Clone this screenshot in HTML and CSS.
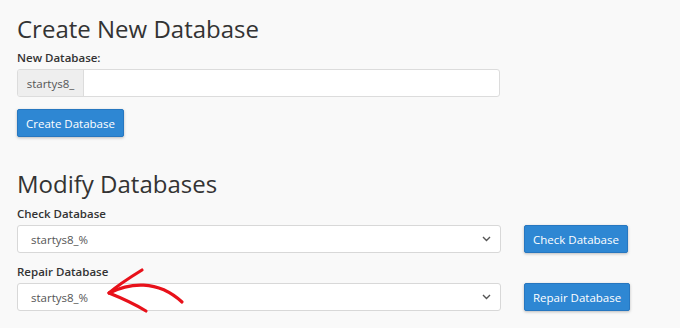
FILE: index.html
```html
<!DOCTYPE html>
<html>
<head>
<meta charset="utf-8">
<link rel="stylesheet" href="styles.css">
</head>
<body>
<div class="page">
  <section class="section">
    <h2 class="title">Create New Database</h2>
    <label class="label first">New Database:</label>
    <div class="input-group">
      <span class="addon">startys8_</span>
      <span class="field"></span>
    </div>
    <div class="actions">
      <button class="btn">Create Database</button>
    </div>
  </section>
  <section class="section modify">
    <h2 class="title">Modify Databases</h2>
    <label class="label first">Check Database</label>
    <div class="row">
      <div class="select"><span>startys8_%</span><svg class="chev" width="9" height="6" viewBox="0 0 9 6"><path d="M1 1l3.5 3.5L8 1" fill="none" stroke="#555" stroke-width="1.4"/></svg></div>
      <button class="btn">Check Database</button>
    </div>
    <label class="label">Repair Database</label>
    <div class="row">
      <div class="select"><span>startys8_%</span><svg class="chev" width="9" height="6" viewBox="0 0 9 6"><path d="M1 1l3.5 3.5L8 1" fill="none" stroke="#555" stroke-width="1.4"/></svg></div>
      <button class="btn">Repair Database</button>
    </div>
  </section>
  <svg class="arrow" width="100" height="60" viewBox="0 0 100 60">
    <path d="M10 34 C 30 24, 58 20, 83 43" fill="none" stroke="#e8111a" stroke-width="3.2" stroke-linecap="round"/>
    <path d="M43 11 C 30 19, 18 27, 10 34 C 20 38, 34 44, 47 52" fill="none" stroke="#e8111a" stroke-width="3.2" stroke-linecap="round" stroke-linejoin="round"/>
  </svg>
</div>
</body>
</html>
```

FILE: styles.css
```css
html, body {
  margin: 0;
  padding: 0;
  background: #f9f9f9;
}
body {
  font-family: "Open Sans", "Liberation Sans", sans-serif;
  color: #333;
  width: 680px;
  height: 328px;
  overflow: hidden;
}
.page {
  position: relative;
  padding: 12px 0 0 17px;
}
.title {
  margin: 0;
  font-size: 24px;
  font-weight: 400;
  line-height: 34px;
  color: #333;
}
.label {
  display: block;
  font-size: 11.5px;
  font-weight: 600;
  line-height: 18px;
  margin-top: 10px;
  color: #333;
}
.label.first { margin-top: 3px; }
.input-group {
  display: flex;
  width: 483px;
  height: 28px;
  margin-top: 2px;
  box-sizing: border-box;
  border: 1px solid #dcdcdc;
  border-radius: 3px;
  background: #fff;
  overflow: hidden;
}
.addon {
  width: 65px;
  background: #eee;
  border-right: 1px solid #dcdcdc;
  font-size: 11.5px;
  color: #555;
  display: flex;
  align-items: center;
  justify-content: center;
}
.field { flex: 1; }
.actions { margin-top: 12px; }
.btn {
  font-family: "Open Sans", "Liberation Sans", sans-serif;
  font-size: 11.5px;
  color: #fff;
  background: #2e87d3;
  border: 1px solid #2777c0;
  border-radius: 2px;
  height: 28px;
  padding: 0 8px;
  box-shadow: 0 1px 3px rgba(0,0,0,0.25);
  cursor: pointer;
}
.modify { margin-top: 30px; }
.modify .label.first { margin-top: 4px; }
.row {
  display: flex;
  align-items: center;
  gap: 23px;
  margin-top: 2px;
}
.select {
  width: 484px;
  height: 28px;
  box-sizing: border-box;
  border: 1px solid #d8d8d8;
  border-radius: 3px;
  background: #fff;
  display: flex;
  align-items: center;
  justify-content: space-between;
  padding: 0 9px 0 13px;
  font-size: 11.5px;
  color: #555;
}
.arrow {
  position: absolute;
  left: 99px;
  top: 259px;
}
```
